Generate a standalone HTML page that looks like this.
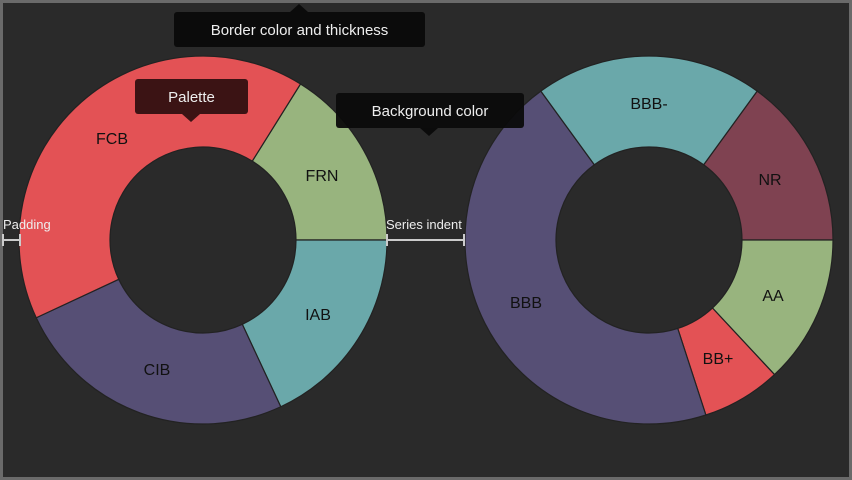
<!DOCTYPE html>
<html><head><style>
body{margin:0;width:852px;height:480px;overflow:hidden;background:#2b2b2b;font-family:"Liberation Sans",sans-serif}
.f{position:absolute;left:0;top:0;width:846px;height:474px;border:3px solid #6a6a6a;background:#2a2a2a}
</style></head><body>
<div class="f"></div>
<svg width="852" height="480" style="position:absolute;left:0;top:0" font-family="Liberation Sans, sans-serif">
<g stroke="#222" stroke-width="1.2">
<path fill="#98b47e" d="M300.5,84 A184,184 0 0 1 387,240 L296,240 A93,93 0 0 0 252.28,161.13 Z"/>
<path fill="#6aa8aa" d="M387,240 A184,184 0 0 1 280.76,406.76 L242.3,324.29 A93,93 0 0 0 296,240 Z"/>
<path fill="#564f75" d="M280.76,406.76 A184,184 0 0 1 36.24,317.76 L118.71,279.3 A93,93 0 0 0 242.3,324.29 Z"/>
<path fill="#e35255" d="M36.24,317.76 A184,184 0 0 1 300.5,84 L252.28,161.13 A93,93 0 0 0 118.71,279.3 Z"/>
<path fill="#7f4251" d="M757.15,91.14 A184,184 0 0 1 833,240 L742,240 A93,93 0 0 0 703.67,164.76 Z"/>
<path fill="#98b47e" d="M833,240 A184,184 0 0 1 774.49,374.58 L712.43,308.02 A93,93 0 0 0 742,240 Z"/>
<path fill="#e35255" d="M774.49,374.58 A184,184 0 0 1 705.86,415 L677.74,328.45 A93,93 0 0 0 712.43,308.02 Z"/>
<path fill="#564f75" d="M705.86,415 A184,184 0 0 1 540.85,91.14 L594.33,164.76 A93,93 0 0 0 677.74,328.45 Z"/>
<path fill="#6aa8aa" d="M540.85,91.14 A184,184 0 0 1 757.15,91.14 L703.67,164.76 A93,93 0 0 0 594.33,164.76 Z"/>
</g>
<g font-size="16" fill="#111" text-anchor="middle">
<text x="112" y="144">FCB</text>
<text x="322" y="181">FRN</text>
<text x="318" y="320">IAB</text>
<text x="157" y="375">CIB</text>
<text x="649" y="109">BBB-</text>
<text x="770" y="185">NR</text>
<text x="773" y="301">AA</text>
<text x="718" y="364">BB+</text>
<text x="526" y="308">BBB</text>
</g>
<g stroke="#ccc" stroke-width="2">
<line x1="3" y1="240" x2="20" y2="240"/><line x1="3" y1="234" x2="3" y2="246"/><line x1="20" y1="234" x2="20" y2="246"/>
<line x1="387" y1="240" x2="464" y2="240"/><line x1="387" y1="234" x2="387" y2="246"/><line x1="464" y1="234" x2="464" y2="246"/>
</g>
<g font-size="13" fill="#eee">
<text x="3" y="229">Padding</text>
<text x="386" y="229">Series indent</text>
</g>
<rect x="174" y="12" width="251" height="35" rx="3" fill="#0b0b0b"/>
<path d="M290 12 L299 4 L308 12Z" fill="#0b0b0b"/>
<rect x="135" y="79" width="113" height="35" rx="3" fill="#3b1314"/>
<path d="M182 114 L191 122 L200 114Z" fill="#3b1314"/>
<rect x="336" y="93" width="188" height="35" rx="3" fill="#0b0b0b" fill-opacity=".95"/>
<path d="M420 128 L429 136 L438 128Z" fill="#0b0b0b"/>
<g font-size="15" fill="#eee" text-anchor="middle">
<text x="299.5" y="35">Border color and thickness</text>
<text x="191.5" y="102">Palette</text>
<text x="430" y="116">Background color</text>
</g>
</svg>
</body></html>
